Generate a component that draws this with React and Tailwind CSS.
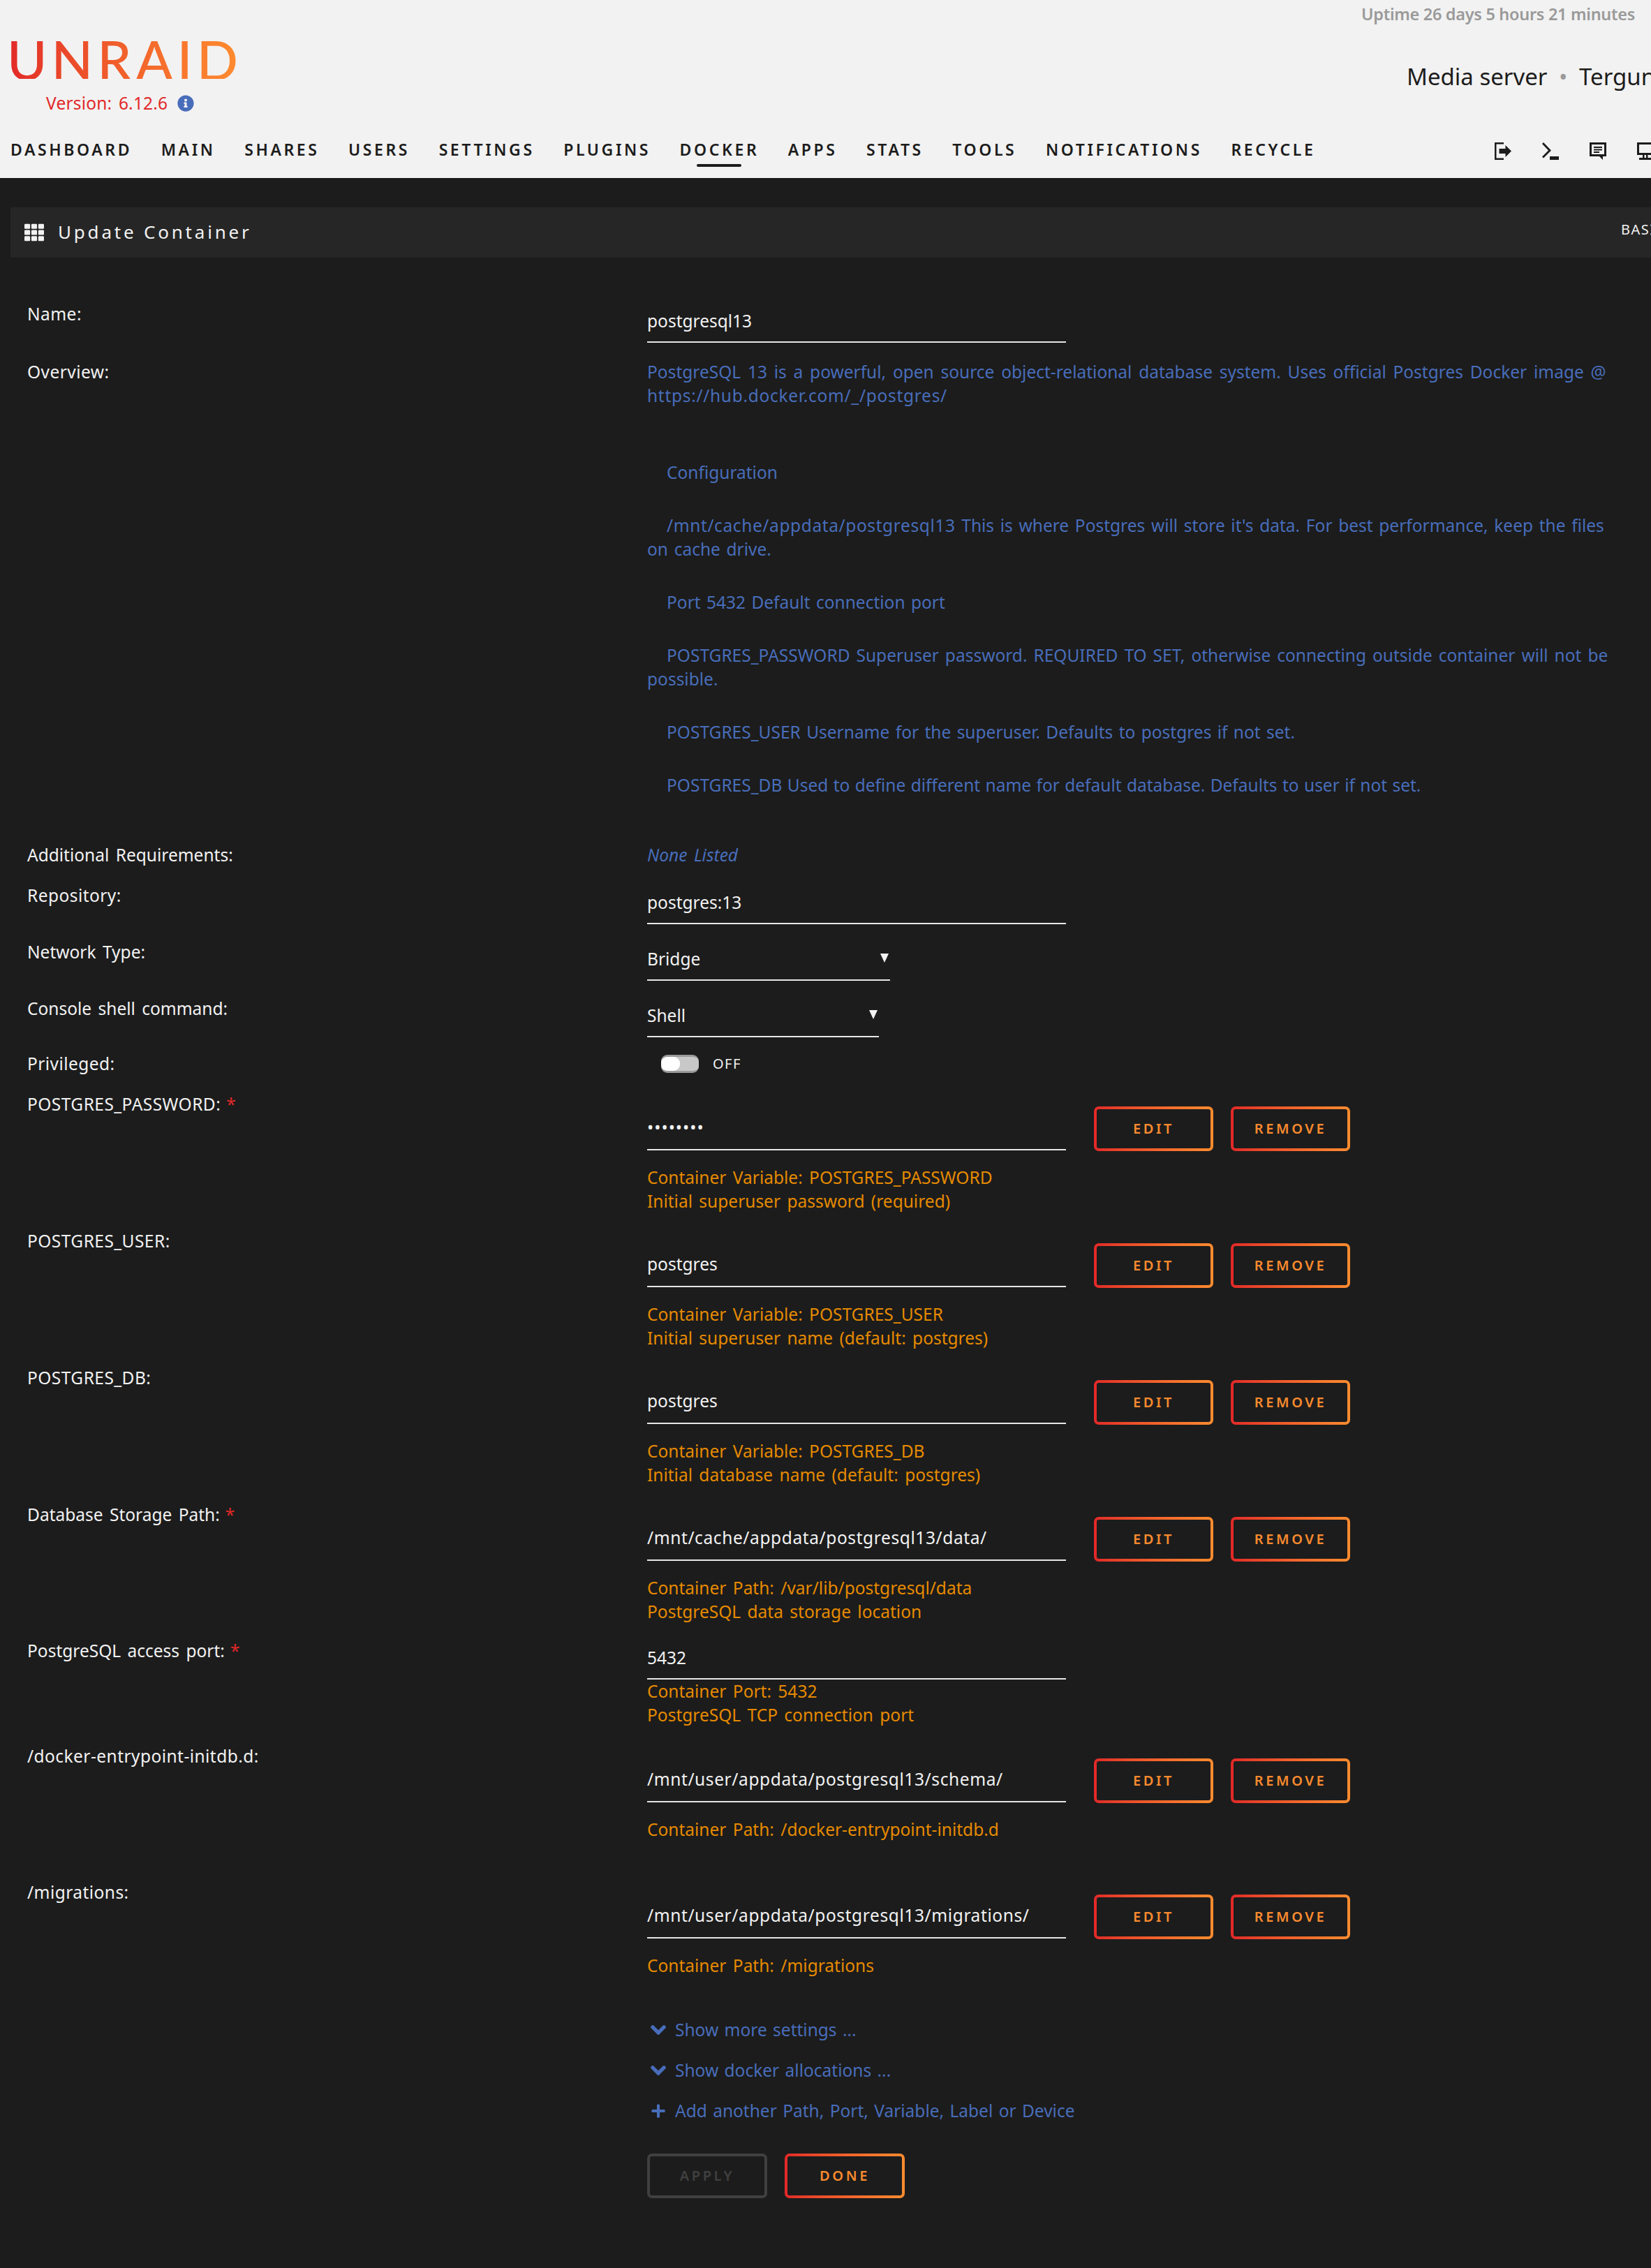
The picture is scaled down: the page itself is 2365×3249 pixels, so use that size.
import React from "react";
import { FaChevronDown, FaInfoCircle, FaPlus, FaTh } from "react-icons/fa";

const font = { fontFamily: '"Noto Sans", sans-serif' };

const navItems = ["DASHBOARD", "MAIN", "SHARES", "USERS", "SETTINGS", "PLUGINS", "DOCKER", "APPS", "STATS", "TOOLS", "NOTIFICATIONS", "RECYCLE"];

const GradientButton = ({ label, width = "w-[171px]", disabled }) => (
  <div
    className={`${width} h-[64px] rounded-[7px] p-[4px] ${
      disabled ? "bg-[#404040]" : "bg-gradient-to-r from-[#e22828] to-[#ff8c2f]"
    }`}
  >
    <div
      className={`flex h-full items-center justify-center rounded-[3px] bg-[#1c1c1c] text-[20px] font-semibold tracking-[3.6px] ${
        disabled ? "text-[#404040]" : "text-[#f98a2e]"
      }`}
    >
      {label}
    </div>
  </div>
);

const Underlined = ({ value, width = "w-[600px]", children }) => (
  <div className={`${width} flex h-[58px] items-start justify-between border-b-2 border-[#e6e6e6] pt-[10px] text-[#f2f2f2]`}>
    <span>{value}</span>
    {children}
  </div>
);

const Label = ({ text, required }) => (
  <div className={`w-[927px] shrink-0 pl-[39px] text-[#f2f2f2] ${text.includes(" ") ? "" : "tracking-[0.45px]"}`}>
    {text}
    {required && <span className="ml-[8px] text-[#e22828]">*</span>}
  </div>
);

const Row = ({ label, required, height, children }) => (
  <div className={`flex ${height}`}>
    <Label text={label} required={required} />
    <div>{children}</div>
  </div>
);

const Desc = ({ lines }) => (
  <div className="text-[#e68a00]">
    {lines.map((line) => (
      <div key={line}>{line}</div>
    ))}
  </div>
);

const VarRow = ({ label, required, value, valueClass = "", lines, height = "h-[196px]" }) => (
  <Row label={label} required={required} height={height}>
    <div className="flex items-start">
      <div className={`w-[600px] h-[83px] border-b-2 border-[#e6e6e6] pt-[33px] text-[#f2f2f2] ${valueClass}`}>{value}</div>
      <div className="ml-[40px] mt-[20px] flex gap-[25px]">
        <GradientButton label="EDIT" />
        <GradientButton label="REMOVE" />
      </div>
    </div>
    <div className="mt-[21px]">
      <Desc lines={lines} />
    </div>
  </Row>
);

const SelectCaret = () => (
  <svg width="12" height="13" viewBox="0 0 12 13" className="mr-[2px] mt-[9px]">
    <polygon points="0,0 12,0 6,13" fill="#f2f2f2" />
  </svg>
);

const Para = ({ className = "", children }) => <p className={`mt-[42px] indent-[28px] ${className}`}>{children}</p>;

const HeaderIcons = () => (
  <div className="ml-auto flex w-[224px] gap-[44px] overflow-hidden">
    <svg width="24" height="25" viewBox="0 0 24 25" className="shrink-0" fill="#1c1c1c">
      <path d="M0 0h13v2.5H2.5v20H13V25H0z" />
      <path d="M6.5 9h9V4l8.500 8.500-8.500 8.500v-5h-9z" />
    </svg>
    <svg width="24" height="25" viewBox="0 0 24 25" className="shrink-0" fill="#1c1c1c">
      <path d="M0 2l2-2 11 11.500L2 22.500l-2-2 9-9z" />
      <rect x="11" y="20" width="13" height="5" />
    </svg>
    <svg width="24" height="25" viewBox="0 0 24 25" className="shrink-0" fill="#1c1c1c">
      <path d="M0 0h24v20h-5v5l-5-5H0zm3 3v14h18V3z" />
      <rect x="6" y="6" width="12" height="2" />
      <rect x="6" y="9.500" width="12" height="2" />
      <rect x="6" y="13" width="8" height="2" />
    </svg>
    <svg width="24" height="25" viewBox="0 0 24 25" className="shrink-0" fill="#1c1c1c">
      <path d="M0 0h24v18H0zm3 3v12h18V3z" />
      <rect x="8" y="18" width="2.500" height="4" />
      <rect x="13" y="18" width="2.500" height="4" />
      <rect x="3" y="22" width="21" height="3" />
    </svg>
  </div>
);

const App = () => {
  return (
    <div className="h-[3249px] w-full overflow-hidden bg-[#1c1c1c] text-[24.5px] leading-[34px] [word-spacing:3px]" style={font}>
      {/* header */}
      <div className="h-[255px] overflow-hidden bg-[#f2f2f2]">
        <div className="flex h-[197px] justify-between">
          <div>
            <div
              className="ml-[10px] mt-[57px] w-fit bg-gradient-to-r from-[#e22828] to-[#ff8c2f] bg-clip-text text-[78px] font-medium leading-[56px] tracking-[6px] text-transparent"
              style={{ fontFamily: "Lato, sans-serif" }}
            >
              UNRAID
            </div>
            <div className="ml-[66px] mt-[18px] flex items-center tracking-[0.2px] text-[#e22828]">
              Version: 6.12.6
              <FaInfoCircle className="ml-[14px] text-[24px] text-[#486dba]" />
            </div>
          </div>
          <div className="w-[350px] shrink-0">
            <div className="flex justify-end whitespace-nowrap pr-[23px] pt-[3px] text-[23.5px] font-semibold tracking-[-0.3px] text-[#9a9a9a] [word-spacing:0]">
              Uptime 26 days 5 hours 21 minutes
            </div>
            <div className="mt-[53px] whitespace-nowrap text-[33px] leading-[40px] text-[#1c1c1c] [word-spacing:0]">
              Media server <span className="mx-[8px] text-[#9a9a9a]">•</span> Tergun
            </div>
          </div>
        </div>
        <div className="flex">
          <div className="flex gap-[41.5px] pl-[15px] text-[23px] font-semibold tracking-[3.6px] text-[#1c1c1c]">
            {navItems.map((item) => (
              <div key={item} className="flex flex-col items-center">
                <span>{item}</span>
                {item === "DOCKER" && <span className="mt-[4px] h-[4px] w-[64px] rounded-full bg-[#1c1c1c]" />}
              </div>
            ))}
          </div>
          <div className="ml-auto mt-[7px]">
            <HeaderIcons />
          </div>
        </div>
      </div>

      {/* title bar */}
      <div className="ml-[15px] mt-[42px] flex h-[72px] items-center justify-between overflow-hidden bg-[#262626] pl-[20px] text-[#f2f2f2]">
        <div className="flex items-center">
          <FaTh className="text-[28px]" />
          <span className="ml-[20px] -translate-y-[1px] text-[26px] tracking-[3.8px] [word-spacing:0]">Update Container</span>
        </div>
        <span className="w-[43px] -translate-y-[4px] overflow-hidden whitespace-nowrap text-[20px] tracking-[1.5px]">BASIC</span>
      </div>

      {/* form */}
      <div className="mt-[64px]">
        <Row label="Name:" height="h-[83px]">
          <Underlined value="postgresql13" />
        </Row>
        <Row label="Overview:" height="h-[692px]">
          <div className="w-[1400px] text-[#486dba]">
            <p className="[word-spacing:3.4px]">
              PostgreSQL 13 is a powerful, open source object-relational database system. Uses official Postgres Docker image @{" "}
              <span className="tracking-[0.7px]">https://hub.docker.com/_/postgres/</span>
            </p>
            <p className="mt-[76px] indent-[28px]">Configuration</p>
            <Para className="[word-spacing:2.3px]">
              <span className="tracking-[0.6px]">/mnt/cache/appdata/postgresql13</span> This is where Postgres will store it's data. For best performance, keep the files on cache drive.
            </Para>
            <Para className="[word-spacing:2px]">Port 5432 Default connection port</Para>
            <Para className="[word-spacing:2.6px]">POSTGRES_PASSWORD Superuser password. REQUIRED TO SET, otherwise connecting outside container will not be possible.</Para>
            <Para className="[word-spacing:2px]">POSTGRES_USER Username for the superuser. Defaults to postgres if not set.</Para>
            <Para className="[word-spacing:1px]">POSTGRES_DB Used to define different name for default database. Defaults to user if not set.</Para>
          </div>
        </Row>
        <Row label="Additional Requirements:" height="h-[58px]">
          <span className="italic text-[#486dba]">None Listed</span>
        </Row>
        <Row label="Repository:" height="h-[81px]">
          <Underlined value="postgres:13" />
        </Row>
        <Row label="Network Type:" height="h-[81px]">
          <Underlined value="Bridge" width="w-[348px]">
            <SelectCaret />
          </Underlined>
        </Row>
        <Row label="Console shell command:" height="h-[79px]">
          <Underlined value="Shell" width="w-[332px]">
            <SelectCaret />
          </Underlined>
        </Row>
        <Row label="Privileged:" height="h-[58px]">
          <div className="ml-[20px] flex items-center">
            <div className="flex h-[26px] w-[54px] rounded-[9px] border-y-[3px] border-[#9a9a9a] bg-[#c8c8c8]">
              <div className="h-full w-[27px] rounded-[9px] bg-white" />
            </div>
            <span className="ml-[20px] text-[20px] tracking-[1.5px] text-[#f2f2f2]">OFF</span>
          </div>
        </Row>
        <VarRow label="POSTGRES_PASSWORD:" required value="••••••••" valueClass="tracking-[1px]" lines={["Container Variable: POSTGRES_PASSWORD", "Initial superuser password (required)"]} />
        <VarRow label="POSTGRES_USER:" value="postgres" lines={["Container Variable: POSTGRES_USER", "Initial superuser name (default: postgres)"]} />
        <VarRow label="POSTGRES_DB:" value="postgres" lines={["Container Variable: POSTGRES_DB", "Initial database name (default: postgres)"]} />
        <VarRow label="Database Storage Path:" required value="/mnt/cache/appdata/postgresql13/data/" valueClass="tracking-[0.6px]" height="h-[195px]" lines={["Container Path: /var/lib/postgresql/data", "PostgreSQL data storage location"]} />
        <Row label="PostgreSQL access port:" required height="h-[151px]">
          <Underlined value="5432" />
          <Desc lines={["Container Port: 5432", "PostgreSQL TCP connection port"]} />
        </Row>
        <VarRow label="/docker-entrypoint-initdb.d:" value="/mnt/user/appdata/postgresql13/schema/" valueClass="tracking-[0.6px]" height="h-[195px]" lines={["Container Path: /docker-entrypoint-initdb.d"]} />
        <VarRow label="/migrations:" value="/mnt/user/appdata/postgresql13/migrations/" valueClass="tracking-[0.6px]" height="h-[197px]" lines={["Container Path: /migrations"]} />
        <div className="ml-[927px] text-[#486dba] [word-spacing:2px]">
          <div className="flex h-[58px] items-start">
            <FaChevronDown stroke="currentColor" strokeWidth={30} className="ml-[4px] mt-[5px] w-[24px] text-[24px]" />
            <span className="ml-[12px]">Show more settings ...</span>
          </div>
          <div className="flex h-[58px] items-start">
            <FaChevronDown stroke="currentColor" strokeWidth={30} className="ml-[4px] mt-[5px] w-[24px] text-[24px]" />
            <span className="ml-[12px]">Show docker allocations ...</span>
          </div>
          <div className="flex h-[78px] items-start">
            <FaPlus className="ml-[4px] mt-[6px] w-[24px] text-[22px]" />
            <span className="ml-[12px]">Add another Path, Port, Variable, Label or Device</span>
          </div>
          <div className="flex gap-[25px]">
            <GradientButton label="APPLY" width="w-[172px]" disabled />
            <GradientButton label="DONE" width="w-[172px]" />
          </div>
        </div>
      </div>
    </div>
  );
};

export default App;
